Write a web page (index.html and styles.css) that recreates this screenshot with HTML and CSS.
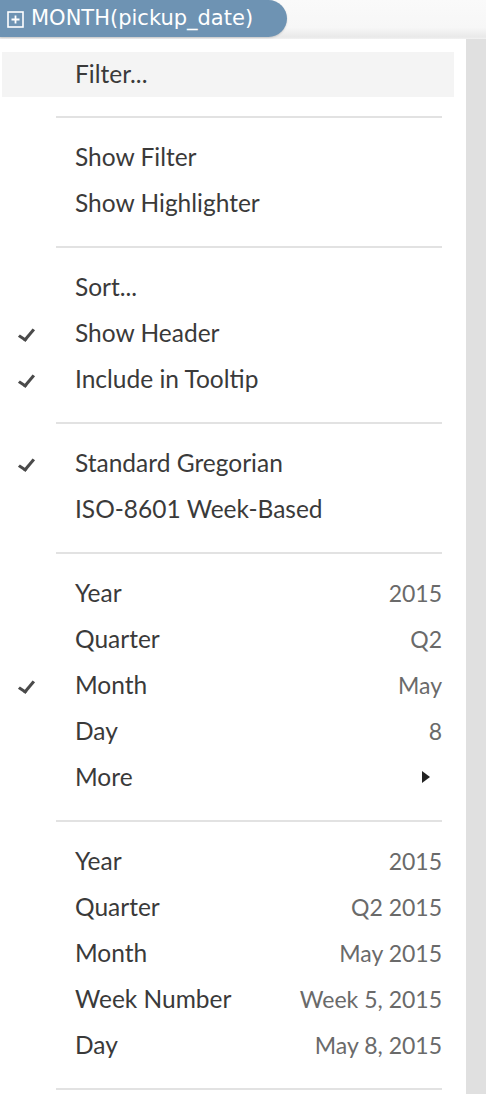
FILE: index.html
```html
<!DOCTYPE html>
<html>
<head>
<meta charset="utf-8">
<link rel="stylesheet" href="styles.css">
</head>
<body>
<div class="topbar">
  <div class="pill">
    <svg class="plus" width="17" height="17" viewBox="0 0 17 17"><rect x="1" y="1" width="15" height="15" fill="none" stroke="#fff" stroke-width="1.6"/><path d="M8.5 4.5v8M4.5 8.5h8" stroke="#fff" stroke-width="1.8"/></svg>
    <span>MONTH(pickup_date)</span>
  </div>
</div>
<div class="wrap">
  <div class="menu">
    <div class="section first">
      <div class="row hl"><span class="label">Filter...</span></div>
    </div>
    <div class="sep"></div>
    <div class="section">
      <div class="row"><span class="label">Show Filter</span></div>
      <div class="row"><span class="label">Show Highlighter</span></div>
    </div>
    <div class="sep"></div>
    <div class="section">
      <div class="row"><span class="label">Sort...</span></div>
      <div class="row checked"><span class="label">Show Header</span></div>
      <div class="row checked"><span class="label">Include in Tooltip</span></div>
    </div>
    <div class="sep"></div>
    <div class="section">
      <div class="row checked"><span class="label">Standard Gregorian</span></div>
      <div class="row"><span class="label">ISO-8601 Week-Based</span></div>
    </div>
    <div class="sep"></div>
    <div class="section">
      <div class="row"><span class="label">Year</span><span class="val">2015</span></div>
      <div class="row"><span class="label">Quarter</span><span class="val">Q2</span></div>
      <div class="row checked"><span class="label">Month</span><span class="val">May</span></div>
      <div class="row"><span class="label">Day</span><span class="val">8</span></div>
      <div class="row"><span class="label">More</span><span class="arrow"></span></div>
    </div>
    <div class="sep"></div>
    <div class="section">
      <div class="row"><span class="label">Year</span><span class="val">2015</span></div>
      <div class="row"><span class="label">Quarter</span><span class="val">Q2 2015</span></div>
      <div class="row"><span class="label">Month</span><span class="val">May 2015</span></div>
      <div class="row"><span class="label">Week Number</span><span class="val">Week 5, 2015</span></div>
      <div class="row"><span class="label">Day</span><span class="val">May 8, 2015</span></div>
    </div>
    <div class="sep"></div>
  </div>
  <div class="strip"></div>
</div>
</body>
</html>
```
FILE: styles.css
```css
* { box-sizing: border-box; }
html, body { margin: 0; padding: 0; background: #fff; }
body {
  font-family: "Lato", "Liberation Sans", sans-serif;
  width: 486px;
  height: 1094px;
  overflow: hidden;
}
.topbar {
  height: 39px;
  background: linear-gradient(to bottom, #fafafa 0%, #f7f7f7 70%, #e9e9e9 95%, #f2f2f2 100%);
}
.pill {
  width: 287px;
  height: 37px;
  background: #6e93b3;
  border-radius: 0 19px 19px 0;
  display: flex;
  align-items: center;
  padding-left: 7px;
  gap: 7px;
  color: #fff;
  font-family: "DejaVu Sans", "Open Sans", sans-serif;
  font-size: 21px;
  box-shadow: 0 1px 2px rgba(0,0,0,0.15);
}
.pill span { line-height: 1; }
.plus { flex: none; margin-top: 1px; }
.wrap {
  display: flex;
  height: 1055px;
}
.menu {
  width: 466px;
  background: #fff;
}
.strip {
  flex: 1;
  background: #e0e0e0;
}
.section { padding: 16px 0 20px; }
.section.first { padding: 13px 12px 19px 2px; }
.row {
  height: 46px;
  display: flex;
  align-items: center;
  padding-left: 75px;
  padding-right: 24px;
  font-size: 24.5px;
  line-height: 1;
  color: #3a3a3a;
  position: relative;
}
.first .row { padding-left: 73px; height: 45px; }
.row.hl { background: #f4f4f4; }
.label { flex: 1; }
.val { color: #6a6a6a; font-size: 23px; }
.row.checked::before {
  content: "";
  position: absolute;
  left: 22px;
  top: 16px;
  width: 6px;
  height: 12px;
  border-right: 3px solid #4a4a4a;
  border-bottom: 3px solid #4a4a4a;
  transform: rotate(40deg) skewY(-6deg);
}
.arrow {
  width: 0; height: 0;
  border-top: 6px solid transparent;
  border-bottom: 6px solid transparent;
  border-left: 8px solid #222;
  margin-right: 12px;
}
.sep {
  height: 2px;
  background: #e2e2e2;
  margin: 0 24px 0 56px;
}
```
